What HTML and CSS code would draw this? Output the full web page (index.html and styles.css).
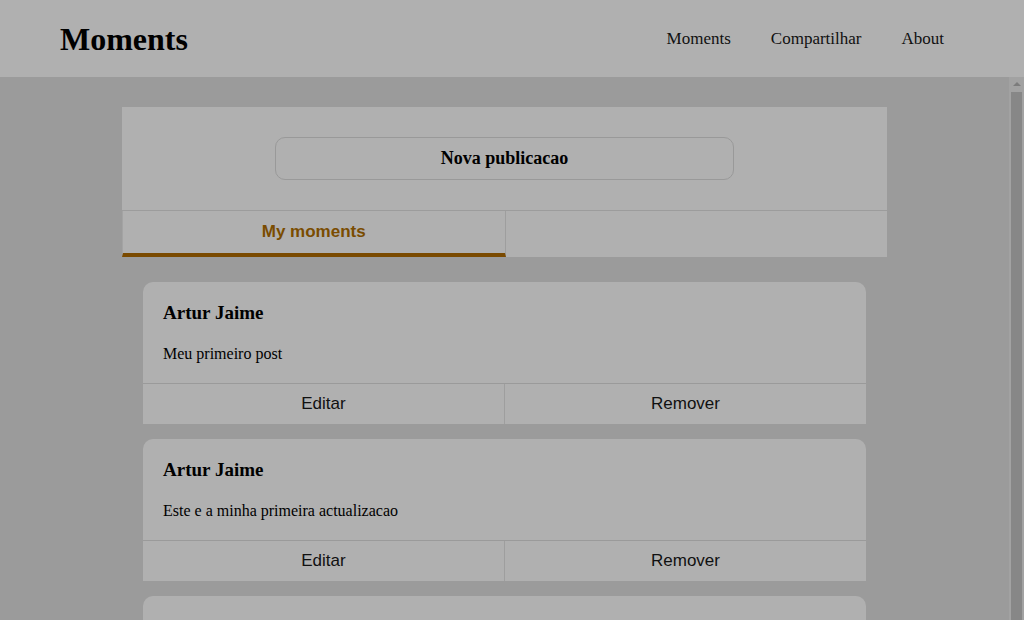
FILE: index.html
```html
<!DOCTYPE html>
<html lang="pt">
<head>
<meta charset="utf-8">
<title>Moments</title>
<link rel="stylesheet" href="styles.css">
</head>
<body>
<header class="topbar">
  <div class="logo">Moments</div>
  <nav class="nav">
    <a class="nav-link">Moments</a>
    <a class="nav-link">Compartilhar</a>
    <a class="nav-link">About</a>
  </nav>
</header>
<div class="layout">
  <main class="scroller">
    <section class="panel">
      <div class="panel-top">
        <button class="new-btn">Nova publicacao</button>
      </div>
      <div class="tabs">
        <div class="tab active">My moments</div>
        <div class="tab"></div>
      </div>
    </section>
    <section class="feed">
      <article class="card">
        <div class="card-body">
          <h3 class="card-title">Artur Jaime</h3>
          <p class="card-text">Meu primeiro post</p>
        </div>
        <div class="card-actions">
          <button class="action">Editar</button>
          <button class="action">Remover</button>
        </div>
      </article>
      <article class="card">
        <div class="card-body">
          <h3 class="card-title">Artur Jaime</h3>
          <p class="card-text">Este e a minha primeira actualizacao</p>
        </div>
        <div class="card-actions">
          <button class="action">Editar</button>
          <button class="action">Remover</button>
        </div>
      </article>
      <article class="card">
        <div class="card-body">
          <h3 class="card-title">Artur Jaime</h3>
          <p class="card-text">Mais um momento</p>
        </div>
        <div class="card-actions">
          <button class="action">Editar</button>
          <button class="action">Remover</button>
        </div>
      </article>
    </section>
  </main>
  <div class="scrollbar" aria-hidden="true">
    <div class="sb-up"><span class="sb-arrow"></span></div>
    <div class="sb-thumb"></div>
  </div>
</div>
</body>
</html>
```

FILE: styles.css
```css
html, body {
  margin: 0;
  padding: 0;
  height: 100%;
}
body {
  overflow: hidden;
  background: #9b9b9b;
  font-family: "Liberation Serif", serif;
  color: #000;
  display: flex;
  flex-direction: column;
}
.topbar {
  height: 77px;
  flex: none;
  box-sizing: border-box;
  background: #b0b0b0;
  display: flex;
  align-items: center;
  justify-content: space-between;
  padding: 0 80px 0 60px;
}
.logo {
  font-size: 32px;
  font-weight: bold;
  line-height: 1;
}
.nav {
  display: flex;
  gap: 40px;
}
.nav-link {
  font-size: 17px;
  color: #111;
}
.layout {
  flex: 1;
  min-height: 0;
  display: flex;
}
.scroller {
  flex: 1;
  overflow: hidden;
  padding: 30px 0 25px;
  box-sizing: border-box;
}
.scrollbar {
  width: 15px;
  flex: none;
  background: #a2a2a2;
  display: flex;
  flex-direction: column;
}
.sb-up {
  height: 15px;
  display: flex;
  justify-content: center;
  align-items: center;
}
.sb-arrow {
  width: 0;
  height: 0;
  border-left: 4px solid transparent;
  border-right: 4px solid transparent;
  border-bottom: 4px solid #7c7c7c;
  margin-top: -1px;
}
.sb-thumb {
  flex: 1;
  margin: 0 2px;
  background: #878787;
}
.panel {
  width: 765px;
  margin: 0 auto;
  background: #b0b0b0;
}
.panel-top {
  padding: 30px 0;
  display: flex;
  justify-content: center;
  border-bottom: 1px solid #9c9c9c;
}
.new-btn {
  width: 459px;
  height: 43px;
  border: 1px solid #999;
  border-radius: 10px;
  background: #b0b0b0;
  font-family: "Liberation Serif", serif;
  font-weight: bold;
  font-size: 18px;
  color: #000;
}
.tabs {
  display: flex;
  height: 46px;
}
.tab {
  flex: 1;
  box-sizing: border-box;
  display: flex;
  align-items: center;
  justify-content: center;
  font-family: "Liberation Sans", sans-serif;
  font-weight: bold;
  font-size: 17px;
  color: #7a4c00;
}
.tab.active {
  border-left: 1px solid #a3a3a3;
  border-right: 1px solid #9e9e9e;
  border-bottom: 4px solid #7a4a00;
}
.feed {
  width: 723px;
  margin: 25px auto 0;
  display: flex;
  flex-direction: column;
  gap: 15px;
}
.card {
  background: #b0b0b0;
  border-radius: 10px 10px 0 0;
}
.card-body {
  padding: 20px 20px 0;
  border-bottom: 1px solid #9a9a9a;
  height: 102px;
  box-sizing: border-box;
}
.card-title {
  margin: 0;
  font-size: 19px;
  line-height: 22px;
  font-weight: bold;
}
.card-text {
  margin: 20px 0 0;
  font-size: 16px;
  line-height: 20px;
}
.card-actions {
  display: flex;
  height: 40px;
}
.action {
  flex: 1;
  background: transparent;
  border: 0;
  font-family: "Liberation Sans", sans-serif;
  font-size: 17px;
  color: #111;
  padding: 0;
}
.action + .action {
  border-left: 1px solid #9e9e9e;
}
```
